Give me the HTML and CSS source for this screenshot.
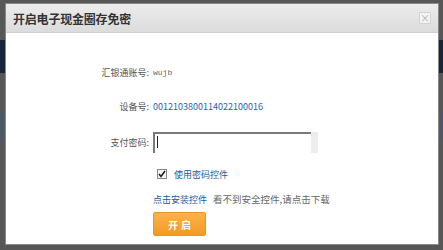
FILE: index.html
```html
<!DOCTYPE html>
<html lang="zh-CN">
<head>
    <meta charset="UTF-8">
    <title>开启电子现金圈存免密</title>
    <link rel="stylesheet" href="styles.css">
</head>
<body>
    <div class="page">
        <div class="topbar"></div>
        <div class="subbar"></div>
    </div>

    <div class="dialog">
        <div class="dialog-head">
            <h1>开启电子现金圈存免密</h1>
            <a href="#" class="close">&times;</a>
        </div>
        <form class="dialog-body">
            <div class="row">
                <span class="label">汇银通账号:</span>
                <span class="account">wujb</span>
            </div>
            <div class="row row-device">
                <span class="label">设备号:</span>
                <span class="device">0012103800114022100016</span>
            </div>
            <div class="row row-pwd">
                <span class="label">支付密码:</span>
                <div class="pwd-box">
                    <span class="caret"></span>
                    <span class="pwd-side"></span>
                </div>
            </div>
            <div class="line line-check">
                <span class="checkbox">
                    <svg width="8" height="8" viewBox="0 0 8 8"><path d="M1 4 L3 6.5 L7 1" fill="none" stroke="#222" stroke-width="1.6"/></svg>
                </span>
                <span class="blue">使用密码控件</span>
            </div>
            <div class="line line-links">
                <a href="#" class="blue">点击安装控件</a>
                <span class="hint">看不到安全控件,请点击下载</span>
            </div>
            <div class="line line-btn">
                <button type="submit">开启</button>
            </div>
        </form>
    </div>
</body>
</html>
```

FILE: styles.css
```css
body {
    margin: 0;
    width: 443px;
    height: 250px;
    overflow: hidden;
    background: #575757;
    font-family: "Noto Sans CJK SC", "Liberation Sans", sans-serif;
}

.page {
    padding-top: 40px;
}

.topbar {
    height: 33px;
    background: #172538;
}

.subbar {
    margin-top: 39px;
    height: 28px;
    background: #4e5864;
}

.dialog {
    position: absolute;
    left: 5px;
    top: 3px;
    width: 432px;
    height: 240px;
    background: #fff;
    border: 1px solid #8a8a8a;
}

.dialog-head {
    height: 28px;
    background: linear-gradient(#ececec, #dcdcdc);
    border-bottom: 1px solid #d0d0d0;
    display: flex;
    align-items: center;
    justify-content: space-between;
    padding: 0 7px 0 7px;
}

h1 {
    margin: 0;
    font-size: 12px;
    font-weight: 700;
    color: #333;
    letter-spacing: -0.2px;
}

.close {
    width: 10px;
    height: 10px;
    border: 1px solid #d2d2d2;
    background: #f4f4f4;
    color: #b0b0b0;
    font-size: 10px;
    line-height: 9px;
    text-align: center;
    text-decoration: none;
}

.dialog-body {
    padding-top: 29px;
}

.row {
    display: grid;
    grid-template-columns: 143px auto;
    column-gap: 4px;
    align-items: center;
    height: 20px;
}

.row-device {
    margin-top: 14px;
}

.row-pwd {
    margin-top: 16px;
    height: 21px;
}

.label {
    text-align: right;
    font-size: 9px;
    color: #555;
}

.account {
    font-family: "Liberation Mono", monospace;
    font-size: 8px;
    color: #666;
}

.device {
    font-size: 9px;
    color: #2f62a6;
}

.pwd-box {
    position: relative;
    width: 165px;
    height: 21px;
    box-sizing: border-box;
    border-top: 2px solid #7a7a7a;
    border-left: 2px solid #7a7a7a;
    background: #fff;
}

.caret {
    position: absolute;
    left: 2px;
    top: 2px;
    width: 1px;
    height: 12px;
    background: #222;
}

.pwd-side {
    position: absolute;
    right: 0;
    top: -2px;
    width: 7px;
    height: 21px;
    background: #ededed;
}

.line {
    padding-left: 147px;
    display: flex;
    align-items: center;
    font-size: 9px;
}

.line-check {
    margin-top: 13px;
    height: 16px;
}

.checkbox {
    margin-left: 4px;
    margin-right: 7px;
    width: 8px;
    height: 8px;
    border: 1px solid #888;
    background: #f4f4f4;
    display: flex;
    align-items: center;
    justify-content: center;
}

.blue {
    color: #245a9e;
    text-decoration: none;
}

.line-links {
    margin-top: 9px;
    height: 16px;
}

.hint {
    margin-left: 6px;
    font-size: 9.5px;
    color: #666;
}

.line-btn {
    margin-top: 5px;
}

button {
    width: 53px;
    height: 24px;
    border: 1px solid #ee9222;
    border-radius: 2px;
    background: linear-gradient(#fcb34a, #f49a22);
    color: #fff;
    font-family: "Noto Sans CJK SC", sans-serif;
    font-size: 10px;
    font-weight: 700;
    letter-spacing: 3px;
    padding: 0 0 0 3px;
    cursor: pointer;
}
```
